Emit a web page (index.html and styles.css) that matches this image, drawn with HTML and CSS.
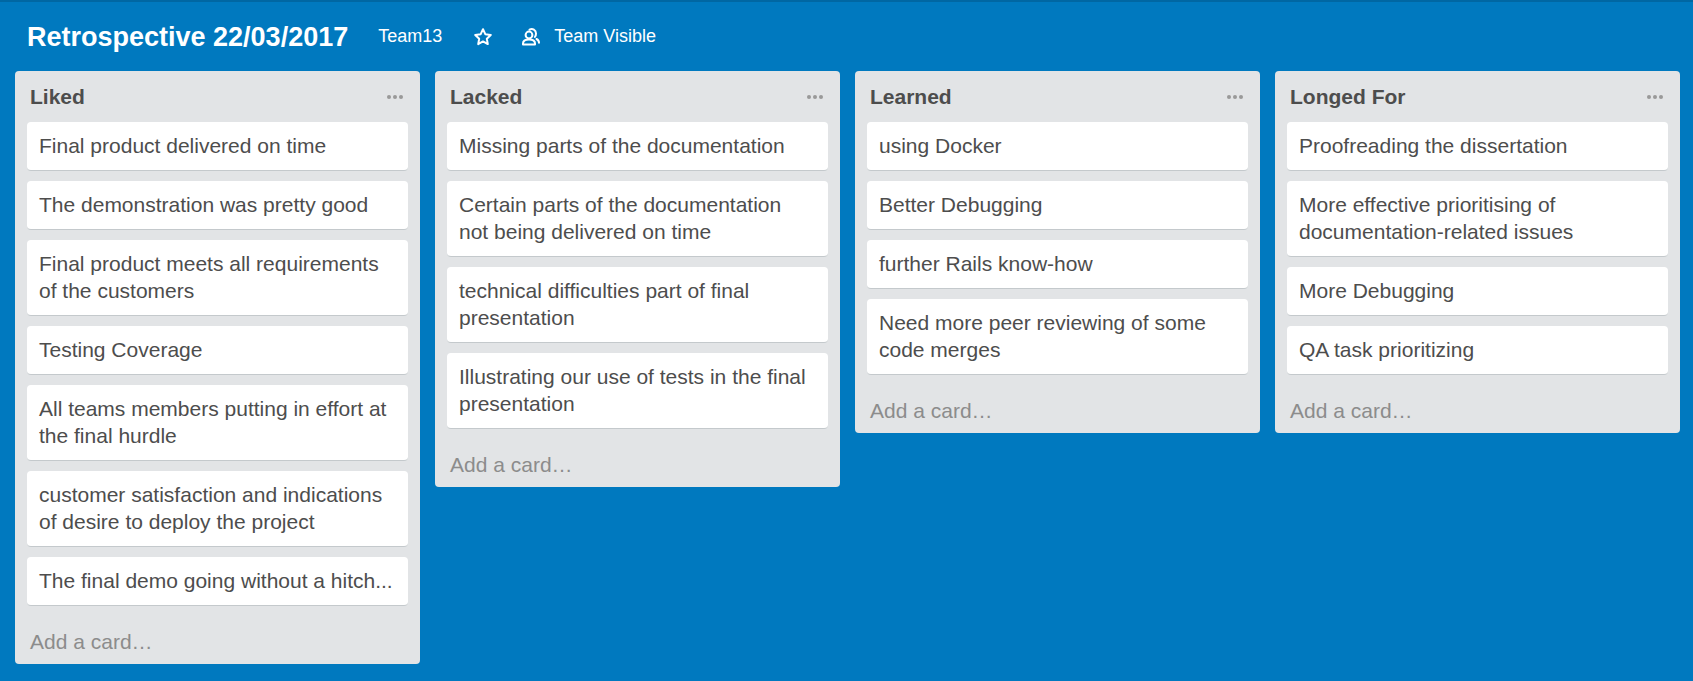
FILE: index.html
```html
<!DOCTYPE html>
<html lang="en">
<head>
	<meta charset="UTF-8">
	<title>Retrospective 22/03/2017</title>
	<link rel="stylesheet" href="styles.css">
</head>
<body>
	<div class="board-header">
		<h1 class="board-title">Retrospective 22/03/2017</h1>
		<span class="board-team">Team13</span>
		<svg class="star-icon" width="20" height="20" viewBox="0 0 20 20"><path d="M10 2.2l2.300 5 5.500.7-4 3.800 1 5.400-4.800-2.700-4.800 2.700 1-5.400-4-3.800 5.500-.7z" fill="none" stroke="#fff" stroke-width="2" stroke-linejoin="round"/></svg>
		<svg class="team-icon" width="20" height="20" viewBox="0 0 20 20"><g fill="none" stroke="#fff" stroke-width="2"><circle cx="8" cy="8" r="3.400"/><path d="M2 17.500v-1c0-2.500 2.500-4 6-4s6 1.500 6 4v1z" stroke-linejoin="round"/><path d="M8.500 2.700c3-1.600 6.500.3 6.500 3.800 0 1.500-.4 2.600-1.100 3.500M15.500 12c1.400.7 2.500 2 2.500 3.800" stroke-linecap="round"/></g></svg>
		<span class="board-visible">Team Visible</span>
	</div>
	<div class="board">
		<div class="list">
			<div class="list-head"><h2>Liked</h2><span class="list-menu"><i></i><i></i><i></i></span></div>
			<div class="card">Final product delivered on time</div>
			<div class="card">The demonstration was pretty good</div>
			<div class="card">Final product meets all requirements of the customers</div>
			<div class="card">Testing Coverage</div>
			<div class="card">All teams members putting in effort at the final hurdle</div>
			<div class="card">customer satisfaction and indications of desire to deploy the project</div>
			<div class="card">The final demo going without a hitch...</div>
			<div class="add-card">Add a card…</div>
		</div>
		<div class="list">
			<div class="list-head"><h2>Lacked</h2><span class="list-menu"><i></i><i></i><i></i></span></div>
			<div class="card">Missing parts of the documentation</div>
			<div class="card">Certain parts of the documentation not being delivered on time</div>
			<div class="card">technical difficulties part of final presentation</div>
			<div class="card">Illustrating our use of tests in the final presentation</div>
			<div class="add-card">Add a card…</div>
		</div>
		<div class="list">
			<div class="list-head"><h2>Learned</h2><span class="list-menu"><i></i><i></i><i></i></span></div>
			<div class="card">using Docker</div>
			<div class="card">Better Debugging</div>
			<div class="card">further Rails know-how</div>
			<div class="card">Need more peer reviewing of some code merges</div>
			<div class="add-card">Add a card…</div>
		</div>
		<div class="list">
			<div class="list-head"><h2>Longed For</h2><span class="list-menu"><i></i><i></i><i></i></span></div>
			<div class="card">Proofreading the dissertation</div>
			<div class="card">More effective prioritising of documentation-related issues</div>
			<div class="card">More Debugging</div>
			<div class="card">QA task prioritizing</div>
			<div class="add-card">Add a card…</div>
		</div>
	</div>
</body>
</html>
```

FILE: styles.css
```css
*{
	margin: 0;
	padding: 0;
	box-sizing: border-box;
}
html, body{
	height: 100%;
	overflow: hidden;
}
body{
	background: #0079bf;
	border-top: 2px solid #0067a3;
	font-family: "Liberation Sans", Arial, sans-serif;
	color: #4d4d4d;
}
.board-header{
	display: flex;
	align-items: center;
	height: 69px;
	padding-left: 27px;
	color: #fff;
}
.board-title{
	font-size: 27px;
	line-height: 32px;
	font-weight: bold;
	margin-right: 30px;
}
.board-team, .board-visible{
	font-size: 18px;
}
.star-icon{
	margin-left: 31px;
}
.team-icon{
	margin-left: 28px;
}
.board-visible{
	margin-left: 13px;
}
.board{
	display: flex;
	align-items: flex-start;
	gap: 15px;
	padding-left: 15px;
}
.list{
	width: 405px;
	background: #e2e4e6;
	border-radius: 4px;
	padding: 0 12px;
}
.list-head{
	display: flex;
	justify-content: space-between;
	align-items: center;
	height: 51px;
	padding: 0 5px 0 3px;
}
.list-head h2{
	font-size: 21px;
	font-weight: bold;
	color: #4d4d4d;
}
.list-menu{
	display: flex;
	gap: 2px;
}
.list-menu i{
	width: 4px;
	height: 4px;
	border-radius: 50%;
	background: #999;
}
.card{
	background: #fff;
	border-radius: 4px;
	border-bottom: 1px solid #c4c9cc;
	padding: 10px 12px 11px;
	margin-bottom: 10px;
	font-size: 21px;
	line-height: 27px;
}
.add-card{
	height: 48px;
	padding: 12px 3px 0;
	font-size: 21px;
	line-height: 27px;
	color: #8c8c8c;
}
```
